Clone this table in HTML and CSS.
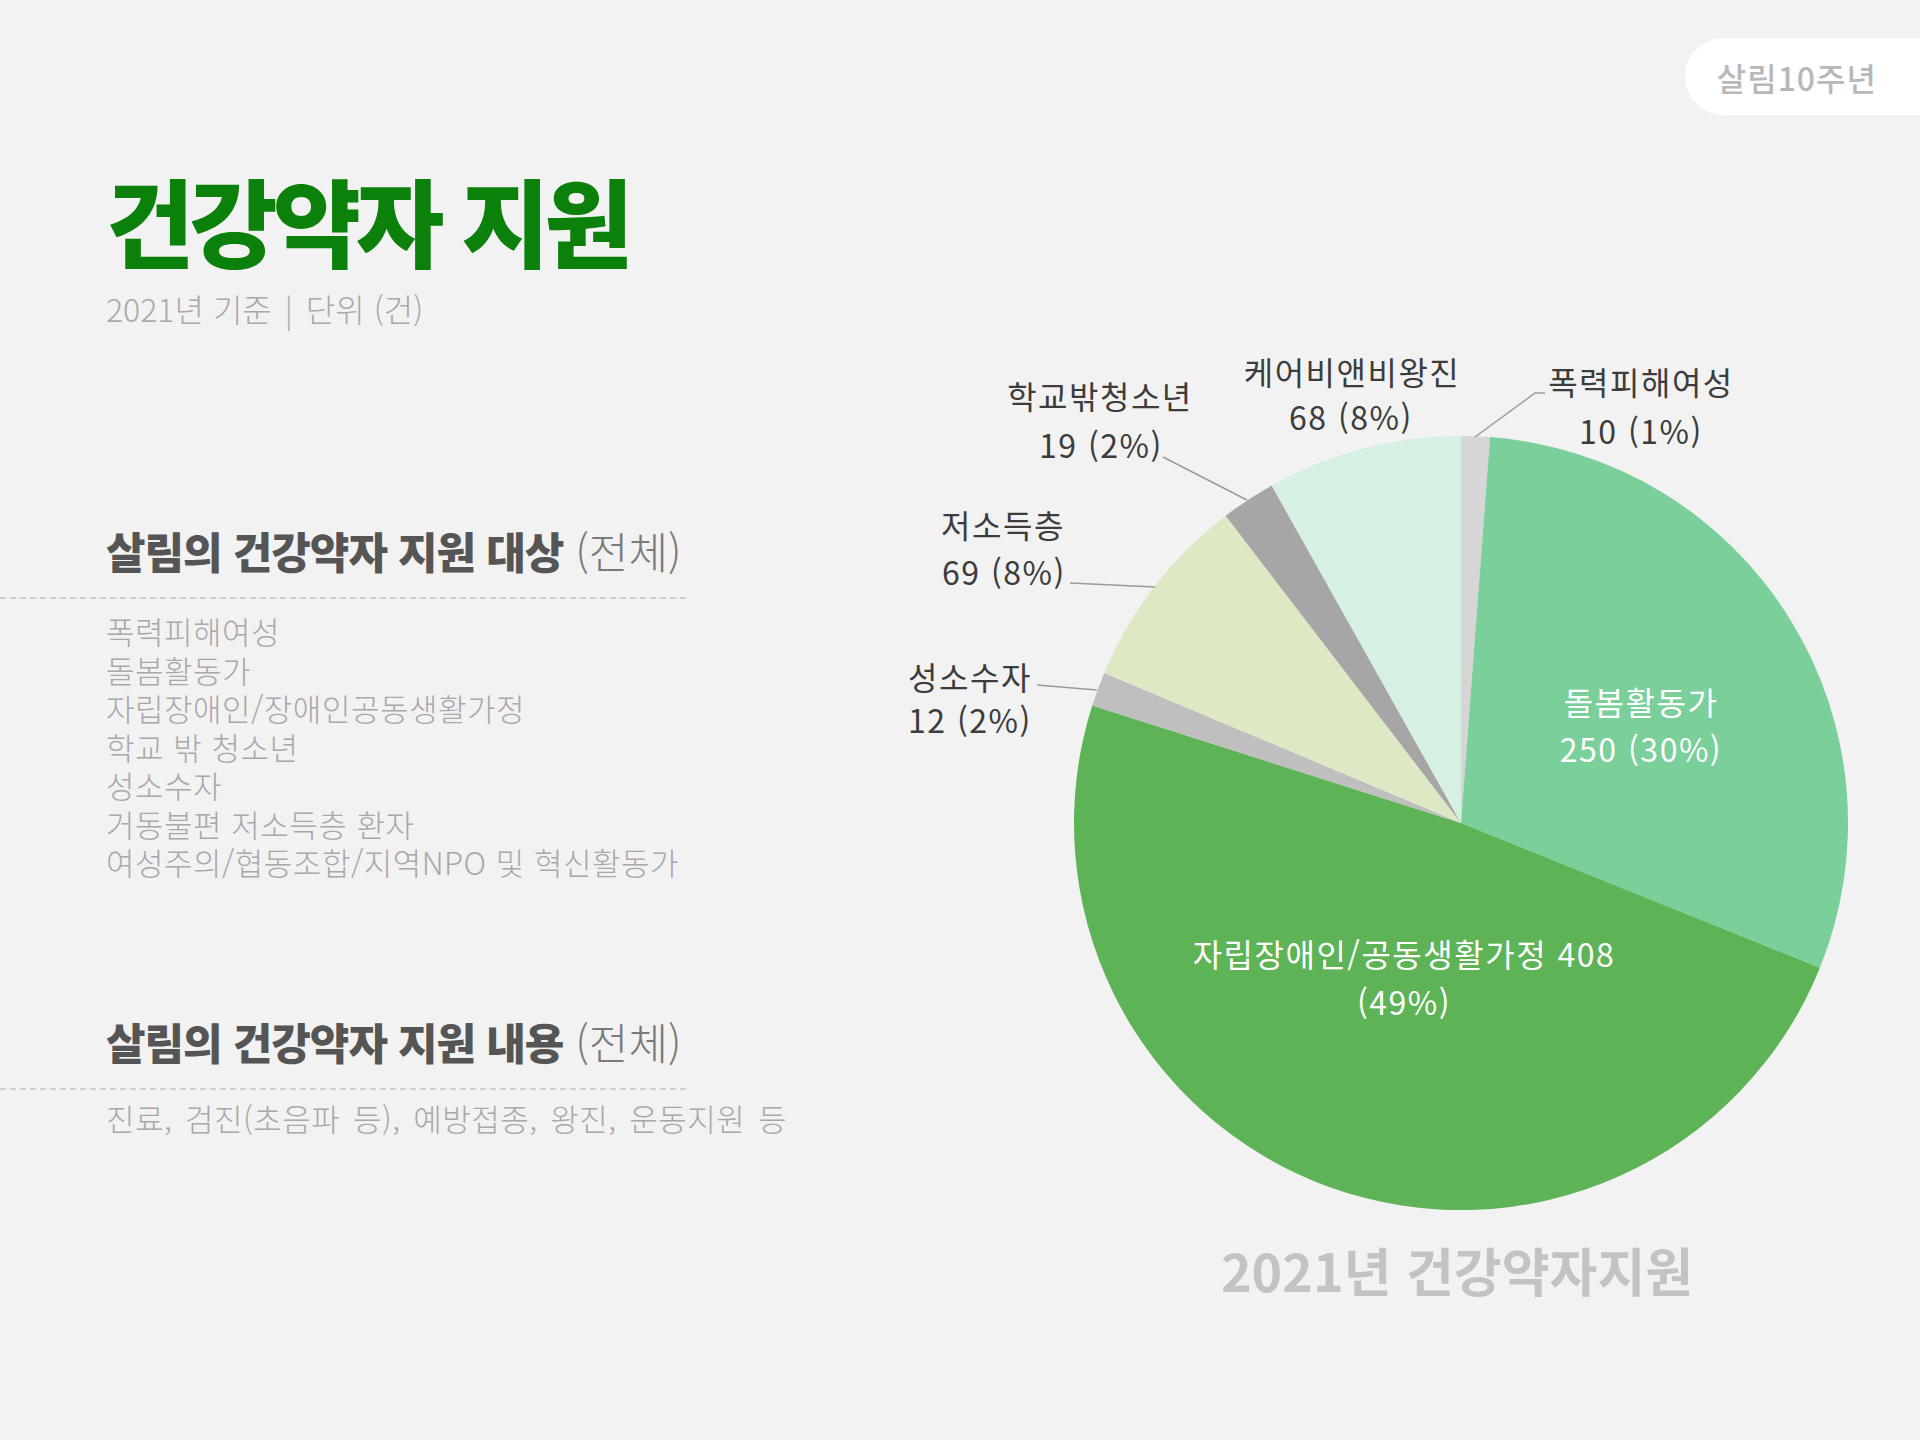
FILE: index.html
```html
<!DOCTYPE html>
<html lang="ko">
<head>
<meta charset="utf-8">
<title>건강약자 지원</title>
<link rel="stylesheet" href="styles.css">
</head>
<body>
<div class="page">
  <header class="topbar">
    <div class="badge">살림10주년</div>
  </header>
  <main class="main">
    <section class="left">
      <h1 class="title">건강약자 지원</h1>
      <p class="subtitle">2021년 기준 <span class="bar">|</span> 단위 (건)</p>

      <div class="block block-first">
        <h2 class="block-head"><strong>살림의 건강약자 지원 대상</strong> <span class="scope">(전체)</span></h2>
        <ul class="items">
          <li>폭력피해여성</li>
          <li>돌봄활동가</li>
          <li>자립장애인/장애인공동생활가정</li>
          <li>학교 밖 청소년</li>
          <li>성소수자</li>
          <li>거동불편 저소득층 환자</li>
          <li>여성주의/협동조합/지역NPO 및 혁신활동가</li>
        </ul>
      </div>

      <div class="block block-second">
        <h2 class="block-head"><strong>살림의 건강약자 지원 내용</strong> <span class="scope">(전체)</span></h2>
        <p class="items items-text">진료, 검진(초음파 등), 예방접종, 왕진, 운동지원 등</p>
      </div>
    </section>

    <figure class="chart">
      <svg class="pie" width="1040" height="1325" viewBox="880 115 1040 1325" xmlns="http://www.w3.org/2000/svg">
        <path class="s-violence" d="M1461 823 L1461 436 A387 387 0 0 1 1490.06 437.09 Z"/>
        <path class="s-care" d="M1461 823 L1490.06 437.09 A387 387 0 0 1 1819.92 967.75 Z"/>
        <path class="s-indep" d="M1461 823 L1819.92 967.75 A387 387 0 0 1 1092.24 705.60 Z"/>
        <path class="s-queer" d="M1461 823 L1092.24 705.60 A387 387 0 0 1 1104.30 672.88 Z"/>
        <path class="s-low" d="M1461 823 L1104.30 672.88 A387 387 0 0 1 1225.60 515.82 Z"/>
        <path class="s-youth" d="M1461 823 L1225.60 515.82 A387 387 0 0 1 1271.71 485.45 Z"/>
        <path class="s-bnb" d="M1461 823 L1271.71 485.45 A387 387 0 0 1 1461 436 Z"/>

        <polyline class="leader" points="1163,457 1247,500"/>
        <polyline class="leader" points="1070,583 1155,587"/>
        <polyline class="leader" points="1037,685 1097,690"/>
        <polyline class="leader" points="1475,437 1535,393 1545,393"/>

        <text class="lbl" x="1100" y="409">학교밖청소년</text>
        <text class="lbl" x="1101" y="458">19 (2%)</text>
        <text class="lbl" x="1352" y="385">케어비앤비왕진</text>
        <text class="lbl" x="1351" y="430">68 (8%)</text>
        <text class="lbl" x="1641" y="395">폭력피해여성</text>
        <text class="lbl" x="1641" y="444">10 (1%)</text>
        <text class="lbl" x="1003" y="538">저소득층</text>
        <text class="lbl" x="1004" y="585">69 (8%)</text>
        <text class="lbl" x="970" y="690">성소수자</text>
        <text class="lbl" x="970" y="733">12 (2%)</text>
        <text class="lbl lbl-in" x="1641" y="715">돌봄활동가</text>
        <text class="lbl lbl-in" x="1641" y="762">250 (30%)</text>
        <text class="lbl lbl-in" x="1404" y="967">자립장애인/공동생활가정 408</text>
        <text class="lbl lbl-in" x="1404" y="1015">(49%)</text>

        <text class="chart-title" x="1457" y="1292">2021년 건강약자지원</text>
      </svg>
    </figure>
  </main>
</div>
</body>
</html>
```

FILE: styles.css
```css
* { box-sizing: border-box; }

html, body {
  margin: 0;
  padding: 0;
}

body {
  background: #f2f2f2;
  font-family: "Noto Sans CJK KR", "Noto Sans", sans-serif;
}

.page {
  width: 1920px;
  height: 1440px;
  display: flex;
  flex-direction: column;
  overflow: hidden;
}

.topbar {
  display: flex;
  justify-content: flex-end;
  padding-top: 38px;
}

.badge {
  height: 77px;
  display: flex;
  align-items: center;
  padding: 0 43px 0 32px;
  background: #ffffff;
  border-radius: 38.5px 0 0 38.5px;
  color: #b8b8b8;
  font-size: 32px;
  font-weight: 500;
  letter-spacing: 1px;
}

.main {
  flex: 1;
  display: grid;
  grid-template-columns: 880px 1fr;
}

.left {
  display: flex;
  flex-direction: column;
  padding-top: 49px;
}

.title {
  margin: 0;
  padding-left: 106px;
  height: 110px;
  line-height: 110px;
  font-size: 96px;
  font-weight: 900;
  letter-spacing: -5px;
  color: #0b800b;
}

.subtitle {
  margin: 14px 0 0;
  padding-left: 106px;
  line-height: 40px;
  font-size: 32px;
  font-weight: 300;
  letter-spacing: 0;
  color: #a9a9a9;
}

.subtitle .bar {
  padding: 0 4px;
}

.block {
  width: 686px;
}

.block-first { margin-top: 194px; }
.block-second { margin-top: 131px; }

.block-head {
  margin: 0;
  padding: 0 0 21px 106px;
  line-height: 56px;
  font-size: 43px;
  font-weight: 400;
  color: #777;
  background-image: repeating-linear-gradient(to right, #cfcfcf 0 6px, transparent 6px 10px);
  background-size: 100% 2px;
  background-repeat: no-repeat;
  background-position: left bottom;
  white-space: nowrap;
}

.block-head strong {
  font-weight: 900;
  color: #555;
  letter-spacing: -1px;
}

.block-head .scope {
  font-weight: 300;
  color: #7a7a7a;
  letter-spacing: 0;
}

.items {
  margin: 0;
  padding: 0 0 0 106px;
  list-style: none;
  font-size: 31px;
  font-weight: 300;
  line-height: 38.5px;
  letter-spacing: 0.5px;
  color: #a8a8a8;
  white-space: nowrap;
}

.items-text {
  word-spacing: 3.5px;
}

.block-first .items { margin-top: 13px; }
.block-second .items { margin-top: 9px; }

.chart {
  margin: 0;
}

.pie {
  display: block;
}

.s-violence { fill: #d6d6d6; }
.s-care { fill: #7acf9b; }
.s-indep { fill: #5db356; }
.s-queer { fill: #bfbfbf; }
.s-low { fill: #dde9c5; }
.s-youth { fill: #a6a6a6; }
.s-bnb { fill: #d6f1e2; }

.leader {
  fill: none;
  stroke: #9a9a9a;
  stroke-width: 1.5;
}

.lbl {
  font-family: "Noto Sans CJK KR", "Noto Sans", sans-serif;
  font-size: 32px;
  font-weight: 400;
  letter-spacing: 1.5px;
  fill: #3c3c3c;
  text-anchor: middle;
}

.lbl-in {
  fill: #ffffff;
}

.chart-title {
  font-family: "Noto Sans CJK KR", "Noto Sans", sans-serif;
  font-size: 52px;
  font-weight: 700;
  fill: #c3c3c3;
  text-anchor: middle;
}
```
